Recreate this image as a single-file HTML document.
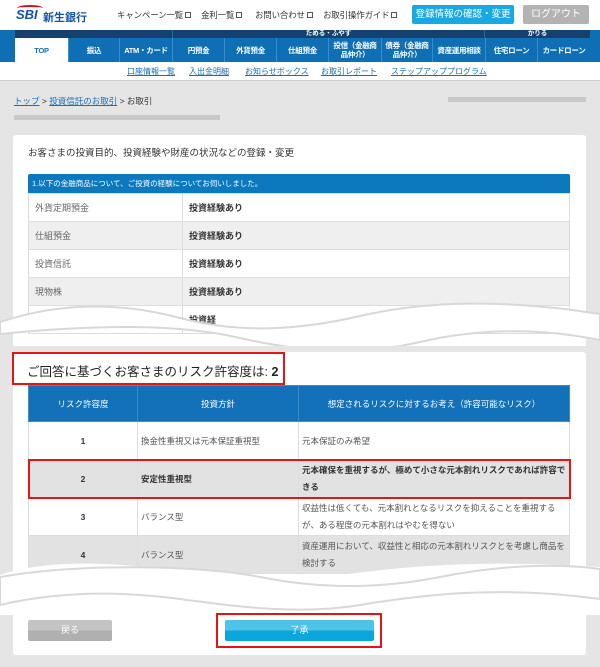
<!DOCTYPE html>
<html><head><meta charset="utf-8"><style>
*{margin:0;padding:0;box-sizing:border-box}
body{width:600px;height:667px;background:#e5e5e5;font-family:"Liberation Sans","Noto Sans CJK JP",sans-serif;position:relative;overflow:hidden;color:#333}
.a{position:absolute}
.hdr{left:0;top:0;width:600px;height:30px;background:#fff}
.nl{font-size:8.5px;color:#333;top:9px;white-space:nowrap;letter-spacing:-0.2px}
.ic{display:inline-block;width:6px;height:6px;border:1px solid #555;margin-left:2px;vertical-align:0}
.nav{left:0;top:30px;width:600px;height:32px;background:#0f6fb5}
.strip{top:30px;height:8px;background:#16416e;font-size:6.5px;color:#fff;text-align:center;line-height:8px;font-weight:bold}
.tab{top:38px;height:24px;color:#fff;font-size:7.5px;font-weight:bold;display:flex;align-items:center;justify-content:center;text-align:center;line-height:9px;border-left:1px solid #3d8cc8;letter-spacing:-0.3px}
.sub{left:0;top:62px;width:600px;height:19px;background:#fff;border-bottom:1px solid #ccc}
.sl{top:66px;font-size:8px;color:#1a6fb0;text-decoration:underline;white-space:nowrap}
.panel{background:#fff;border-radius:3px}
table{border-collapse:collapse;position:absolute}
td{font-size:9px}
.t1 td{height:28px;border:1px solid #ddd;padding-left:6px}
.t2 td{border:1px solid #ddd;font-size:8.5px}
.blur{background:#c8c8c8;height:5px;position:absolute}
</style></head><body>
<div class="a hdr"></div>
<div class="a" style="left:16px;top:7px;font-size:13px;font-weight:bold;font-style:italic;color:#1552a6">SBI</div>
<div class="a" style="left:17px;top:5px;width:26px;height:6px;border-top:2px solid #d0121b;border-radius:50% 50% 0 0"></div>
<div class="a" style="left:43px;top:9px;font-size:11px;font-weight:bold;color:#1552a6">新生銀行</div>
<div class="a nl" style="left:117px">キャンペーン一覧<span class="ic"></span></div>
<div class="a nl" style="left:201px">金利一覧<span class="ic"></span></div>
<div class="a nl" style="left:255px">お問い合わせ<span class="ic"></span></div>
<div class="a nl" style="left:323px">お取引操作ガイド<span class="ic"></span></div>
<div class="a" style="left:412px;top:5px;width:102px;height:19px;background:#19a9e2;color:#fff;font-size:9.5px;text-align:center;line-height:19px;border-radius:2px">登録情報の確認・変更</div>
<div class="a" style="left:523px;top:5px;width:66px;height:19px;background:#b3b3b3;color:#fff;font-size:10px;text-align:center;line-height:19px;border-radius:2px">ログアウト</div>
<div class="a nav"></div>
<div class="a strip" style="left:15px;width:157px"></div>
<div class="a strip" style="left:173px;width:311px">ためる・ふやす</div>
<div class="a strip" style="left:485px;width:105px">かりる</div>
<div class="a tab" style="left:15px;width:53px;background:#fff;color:#1a6fb0;border:none">TOP</div>
<div class="a tab" style="left:68px;width:51px">振込</div>
<div class="a tab" style="left:119px;width:53px">ATM・カード</div>
<div class="a tab" style="left:172px;width:52px">円預金</div>
<div class="a tab" style="left:224px;width:52px">外貨預金</div>
<div class="a tab" style="left:276px;width:52px">仕組預金</div>
<div class="a tab" style="left:328px;width:53px">投信（金融商<br>品仲介）</div>
<div class="a tab" style="left:381px;width:51px">債券（金融商<br>品仲介）</div>
<div class="a tab" style="left:432px;width:53px">資産運用相談</div>
<div class="a tab" style="left:485px;width:52px">住宅ローン</div>
<div class="a tab" style="left:537px;width:53px">カードローン</div>
<div class="a sub"></div>
<div class="a sl" style="left:127px">口座情報一覧</div>
<div class="a sl" style="left:189px">入出金明細</div>
<div class="a sl" style="left:245px">お知らせボックス</div>
<div class="a sl" style="left:321px">お取引レポート</div>
<div class="a sl" style="left:391px">ステップアッププログラム</div>
<div class="a" style="left:0;top:81px;width:1px;height:1px"></div>
<div class="a" style="left:14px;top:95px;font-size:8.5px;color:#333"><span style="color:#1a6fb0;text-decoration:underline">トップ</span> &gt; <span style="color:#1a6fb0;text-decoration:underline">投資信託のお取引</span> &gt; お取引</div>
<div class="blur" style="left:448px;top:97px;width:138px"></div>
<div class="blur" style="left:14px;top:115px;width:206px"></div>

<div class="a panel" style="left:13px;top:135px;width:573px;height:213px"></div>
<div class="a" style="left:28px;top:145px;font-size:9.5px">お客さまの投資目的、投資経験や財産の状況などの登録・変更</div>
<div class="a" style="left:28px;top:174px;width:542px;height:19px;background:#0c78bd;color:#fff;font-size:7.5px;line-height:19px;padding-left:4px;border-radius:2px 2px 0 0">1.以下の金融商品について、ご投資の経験についてお伺いしました。</div>
<table class="t1" style="left:28px;top:193px;width:542px">
<tr><td style="width:154px;color:#666">外貨定期預金</td><td style="font-weight:bold">投資経験あり</td></tr>
<tr style="background:#efefef"><td style="color:#666">仕組預金</td><td style="font-weight:bold">投資経験あり</td></tr>
<tr><td style="color:#666">投資信託</td><td style="font-weight:bold">投資経験あり</td></tr>
<tr style="background:#efefef"><td style="color:#666">現物株</td><td style="font-weight:bold">投資経験あり</td></tr>
<tr><td></td><td style="font-weight:bold">投資経</td></tr>
</table>
<svg class="a" style="left:0;top:300px" width="600" height="55"><path d="M0 22 C60 2 120 2 180 18 S300 30 360 16 S500 -2 600 14 L600 40 C540 28 480 28 420 42 S300 52 240 38 S100 24 0 34Z" fill="#fff" stroke="#d8d8d8" stroke-width="2"/></svg>
<div class="a" style="left:0;top:346px;width:600px;height:6px;background:#e5e5e5"></div>

<div class="a panel" style="left:13px;top:352px;width:573px;height:303px"></div>
<div class="a" style="left:12px;top:352px;width:273px;height:33px;border:2px solid #e61515"></div>
<div class="a" style="left:27px;top:361px;font-size:12.5px;color:#222;white-space:nowrap">ご回答に基づくお客さまのリスク許容度は: <b>2</b></div>
<table class="t2" style="left:28px;top:385px;width:542px">
<tr style="background:#1271b9;color:#fff;height:36px"><td style="width:109px;text-align:center;border-color:#3d8cc8">リスク許容度</td><td style="width:161px;text-align:center;border-color:#3d8cc8">投資方針</td><td style="text-align:center;border-color:#3d8cc8">想定されるリスクに対するお考え（許容可能なリスク）</td></tr>
<tr style="height:38px"><td style="text-align:center;font-weight:bold">1</td><td style="padding-left:3px;color:#555">換金性重視又は元本保証重視型</td><td style="padding-left:3px;color:#555">元本保証のみ希望</td></tr>
<tr style="height:38px;background:#e2e2e2;font-weight:bold;outline:2px solid #e61515;outline-offset:-1px"><td style="text-align:center">2</td><td style="padding-left:3px">安定性重視型</td><td style="padding-left:3px;line-height:17px">元本確保を重視するが、極めて小さな元本割れリスクであれば許容できる</td></tr>
<tr style="height:38px"><td style="text-align:center;font-weight:bold">3</td><td style="padding-left:3px;color:#555">バランス型</td><td style="padding-left:3px;color:#555;line-height:17px">収益性は低くても、元本割れとなるリスクを抑えることを重視するが、ある程度の元本割れはやむを得ない</td></tr>
<tr style="height:38px;background:#e2e2e2"><td style="text-align:center;font-weight:bold">4</td><td style="padding-left:3px;color:#555">バランス型</td><td style="padding-left:3px;color:#555;line-height:17px">資産運用において、収益性と相応の元本割れリスクとを考慮し商品を検討する</td></tr>
</table>
<svg class="a" style="left:0;top:555px" width="600" height="60"><path d="M0 20 C40 6 100 6 160 14 S280 28 340 20 S480 4 600 12 L600 60 L0 60Z" fill="#fff"/><path d="M0 50 C60 36 120 36 180 44 S300 60 360 50 S500 30 600 44 L600 14 C560 8 500 10 440 22 S320 34 260 22 S80 8 0 22Z" fill="#fff" stroke="#d8d8d8" stroke-width="2"/></svg>
<div class="a" style="left:28px;top:620px;width:84px;height:21px;background:linear-gradient(#c4c4c4 50%,#b0b0b0 50%);color:#fff;font-size:9px;text-align:center;line-height:21px;border-radius:2px">戻る</div>
<div class="a" style="left:216px;top:613px;width:166px;height:35px;border:2px solid #e61515"></div>
<div class="a" style="left:225px;top:620px;width:149px;height:21px;background:linear-gradient(#4fc2e8 50%,#0aa6dc 50%);color:#fff;font-size:9px;text-align:center;line-height:21px;border-radius:2px">了承</div>
</body></html>
